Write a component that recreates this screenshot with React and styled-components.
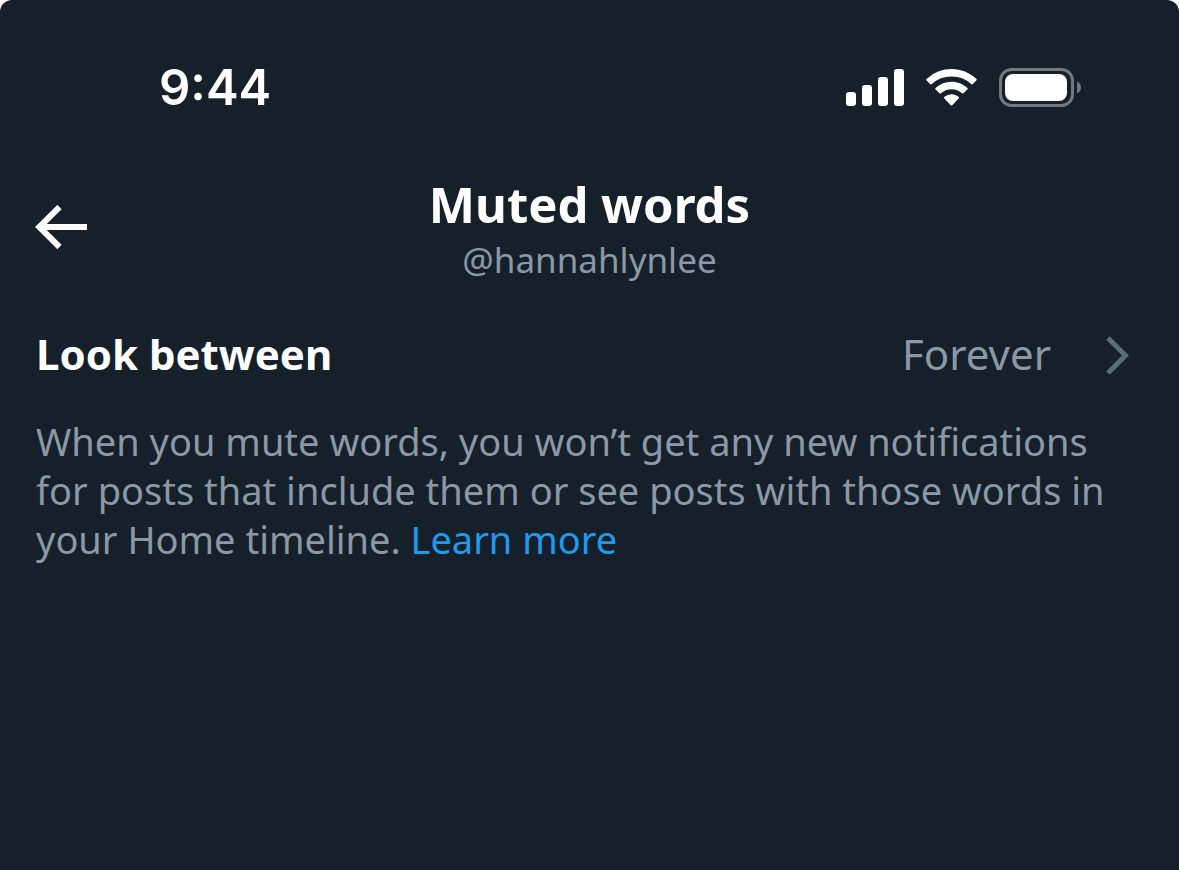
import React from 'react';
import styled, { createGlobalStyle } from 'styled-components';

const GlobalStyle = createGlobalStyle`
  * {
    box-sizing: border-box;
  }

  body {
    margin: 0;
    background-color: #ffffff;
    font-family: 'Noto Sans', 'Open Sans', sans-serif;
  }
`;

const Screen = styled.div`
  display: flex;
  flex-direction: column;
  min-height: 100vh;
  background-color: #16202a;
  border-radius: 12px 12px 0 0;
  color: #ffffff;
`;

const StatusBar = styled.div`
  display: flex;
  justify-content: space-between;
  align-items: center;
  padding: 56px 98px 0 159px;
`;

const Time = styled.time`
  font-family: Inter, 'Liberation Sans', sans-serif;
  font-size: 49px;
  font-weight: 600;
  line-height: 64px;
`;

const StatusIcons = styled.div`
  display: flex;
  align-items: center;
  gap: 22px;
`;

const Header = styled.header`
  display: grid;
  grid-template-columns: 52px 1fr 52px;
  align-items: center;
  padding: 52px 35px 0;
`;

const BackButton = styled.button`
  display: flex;
  margin: 0;
  padding: 0;
  border: none;
  background: none;
  color: inherit;
  cursor: pointer;
`;

const Heading = styled.div`
  text-align: center;
`;

const Title = styled.h1`
  margin: 0;
  font-size: 49px;
  font-weight: 700;
  line-height: 64px;
`;

const Handle = styled.div`
  color: #8b98a5;
  font-size: 35px;
  line-height: 48px;
`;

const Content = styled.main`
  padding: 40px 36px;
`;

const SettingRow = styled.button`
  display: flex;
  align-items: center;
  width: 100%;
  margin: 0;
  padding: 0 14px 0 0;
  border: none;
  background: none;
  color: #ffffff;
  font-family: inherit;
  font-size: 42px;
  line-height: 60px;
  cursor: pointer;
`;

const Label = styled.span`
  flex: 1;
  font-weight: 700;
  text-align: left;
`;

const Value = styled.span`
  margin-right: 55px;
  color: #8b98a5;
`;

const Description = styled.p`
  margin: 33px 0 0;
  color: #8b98a5;
  font-size: 38px;
  line-height: 49px;
`;

const Link = styled.a`
  color: #1d9bf0;
  text-decoration: none;
`;

function SignalIcon() {
  return (
    <svg width="58" height="38" viewBox="0 0 58 38" fill="currentColor" aria-hidden="true">
      <rect x="0" y="23" width="10" height="14" rx="3" />
      <rect x="16" y="16" width="10" height="21" rx="3" />
      <rect x="32" y="8" width="10" height="29" rx="3" />
      <rect x="48" y="0" width="10" height="37" rx="3" />
    </svg>
  );
}

function WifiIcon() {
  return (
    <svg width="51" height="38" viewBox="0 0 51 38" fill="currentColor" aria-hidden="true">
      <path d="M25.5 0C35 0 43.6 3.7 50.2 9.7c.7.6.7 1.3.1 1.9l-3.4 3.4c-.6.6-1.2.6-1.8 0A29 29 0 0 0 25.5 7.6 29 29 0 0 0 5.9 15c-.6.6-1.2.6-1.8 0L.7 11.6c-.6-.6-.6-1.3.1-1.9A36.5 36.5 0 0 1 25.5 0Z" />
      <path d="M25.5 12.7c6 0 11.5 2.3 15.7 6 .7.6.7 1.3.1 1.9l-3.5 3.5c-.6.6-1.2.6-1.8.1a16 16 0 0 0-10.5-3.9 16 16 0 0 0-10.5 3.9c-.6.5-1.2.5-1.8-.1l-3.5-3.5c-.6-.6-.6-1.3.1-1.9a23.7 23.7 0 0 1 15.7-6Z" />
      <path d="M25.5 25.3c2.7 0 5.1.9 7 2.5.7.6.7 1.2.1 1.8l-6.1 6.3c-.6.7-1.4.7-2 0l-6.1-6.3c-.6-.6-.6-1.2.1-1.8a11 11 0 0 1 7-2.5Z" />
    </svg>
  );
}

function BatteryIcon() {
  return (
    <svg width="82" height="40" viewBox="0 0 82 40" aria-hidden="true">
      <rect x="1.5" y="1.5" width="72" height="36" rx="11" fill="none" stroke="#737980" strokeWidth="3" />
      <rect x="6" y="6" width="62" height="27" rx="8" fill="#ffffff" />
      <path d="M78 13.5c2.600 1.200 4 3.400 4 6s-1.400 4.800-4 6Z" fill="#737980" />
    </svg>
  );
}

function BackIcon() {
  return (
    <svg width="52" height="46" viewBox="0 0 52 46" fill="none" stroke="currentColor" strokeWidth="6" aria-hidden="true">
      <path d="M24.5 2 4.300 22l20.200 20M5 22h47" />
    </svg>
  );
}

function ChevronIcon() {
  return (
    <svg width="23" height="40" viewBox="0 0 23 40" fill="none" stroke="#5b6c7c" strokeWidth="5" aria-hidden="true">
      <path d="M2 4l17.500 17.500L2 39" />
    </svg>
  );
}

export default function App() {
  return (
    <>
      <GlobalStyle />
      <Screen>
        <StatusBar>
          <Time>9:44</Time>
          <StatusIcons>
            <SignalIcon />
            <WifiIcon />
            <BatteryIcon />
          </StatusIcons>
        </StatusBar>
        <Header>
          <BackButton type="button" aria-label="Back">
            <BackIcon />
          </BackButton>
          <Heading>
            <Title>Muted words</Title>
            <Handle>@hannahlynlee</Handle>
          </Heading>
        </Header>
        <Content>
          <SettingRow type="button">
            <Label>Look between</Label>
            <Value>Forever</Value>
            <ChevronIcon />
          </SettingRow>
          <Description>
            When you mute words, you won’t get any new notifications for posts that include them or see posts with
            those words in your Home timeline. <Link href="#learn-more">Learn more</Link>
          </Description>
        </Content>
      </Screen>
    </>
  );
}
